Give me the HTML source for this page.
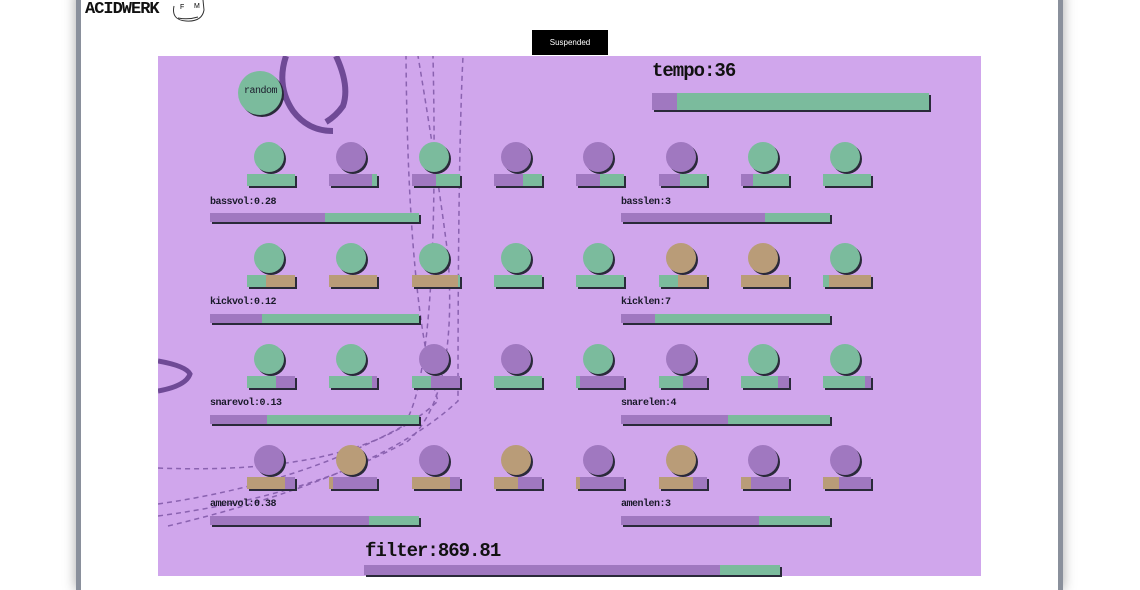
<!DOCTYPE html>
<html><head><meta charset="utf-8"><style>
body{margin:0;width:1140px;height:570px;overflow:hidden;background:#fff;position:relative;font-family:"Liberation Mono",monospace}
.frame{position:absolute;left:76px;top:-10px;width:977px;height:600px;border-left:5px solid #8a909c;border-right:5px solid #8a909c;box-shadow:0 0 12px rgba(0,0,0,.35);background:#fff}
.abs{position:absolute}
.panel{position:absolute;left:158px;top:56px;width:823px;height:520px;background:#d0a6ec;overflow:hidden}
.c{position:absolute;width:30px;height:30px;border-radius:50%;box-shadow:2px 2px 0 #2a2a3a}
.b{position:absolute;height:12px;box-shadow:2px 2px 0 #2a2a3a;display:flex;overflow:hidden}
.lb{position:absolute;height:9px;box-shadow:2px 2px 0 #2a2a3a;display:flex;overflow:hidden}
.lab{position:absolute;font:bold 10px "Liberation Mono",monospace;color:#1a1a2a;letter-spacing:-0.5px}
</style></head><body>
<div class="frame"></div>
<div class="abs" style="left:85px;top:0px;font:bold 17px 'Liberation Mono',monospace;letter-spacing:-1px;color:#111">ACIDWERK</div>
<svg class="abs" style="left:168px;top:0" width="40" height="24"><path d="M6 6 Q3 20 18 21 Q34 22 36 10 L35 0" fill="none" stroke="#333" stroke-width="1"/><path d="M10 18 Q20 20 30 17" stroke="#333" fill="none"/><text x="12" y="9" font-size="7" font-family="Liberation Sans">F</text><text x="26" y="8" font-size="7" font-family="Liberation Sans">M</text></svg>
<div class="abs" style="left:532px;top:30px;width:76px;height:25px;background:#000;color:#fff;font:8px 'Liberation Sans',sans-serif;text-align:center;line-height:25px">Suspended</div>
<div class="panel">
<svg class="abs" style="left:0;top:0" width="823" height="520" fill="none" stroke="#6f4a96">
<path d="M128 0 Q118 30 135 55 Q150 75 175 75" stroke-width="6"/>
<path d="M178 0 Q192 30 185 50 Q178 60 168 66" stroke-width="6"/>
<path d="M0 305 Q28 310 32 318 Q28 330 0 335" stroke-width="5"/>
<g stroke-width="1.5" stroke-dasharray="5 4" stroke="#8a62b0"><path d="M0 460 Q150 440 250 385 Q300 340 290 200 Q280 120 260 0"/><path d="M0 448 Q140 428 245 370 Q282 320 275 0"/><path d="M0 412 Q200 420 280 345 Q250 250 248 0"/><path d="M10 470 Q220 420 300 345 Q300 100 305 0"/></g>
</svg>
</div>
<div class="c" style="left:238px;top:71px;width:44px;height:44px;background:#7bbb9d"></div>
<div class="lab" style="left:244px;top:86px;font-weight:normal">random</div>
<div class="abs" style="left:652px;top:60px;font:bold 19px 'Liberation Mono',monospace;color:#111;letter-spacing:-1px">tempo:36</div>
<div class="lb" style="left:652px;top:93px;width:277px;height:17px"><div style="width:25px;background:#a078c0"></div><div style="flex:1;background:#7bbb9d"></div></div>
<div id="seq"></div>
<div class="lab" style="left:210px;top:197px">bassvol:0.28</div>
<div class="lab" style="left:621px;top:197px">basslen:3</div>
<div class="lab" style="left:210px;top:297px">kickvol:0.12</div>
<div class="lab" style="left:621px;top:297px">kicklen:7</div>
<div class="lab" style="left:210px;top:398px">snarevol:0.13</div>
<div class="lab" style="left:621px;top:398px">snarelen:4</div>
<div class="lab" style="left:210px;top:499px">amenvol:0.38</div>
<div class="lab" style="left:621px;top:499px">amenlen:3</div>
<div class="abs" style="left:365px;top:540px;font:bold 19px 'Liberation Mono',monospace;color:#111;letter-spacing:-1px">filter:869.81</div>
<div class="lb" style="left:364px;top:565px;width:416px;height:10px"><div style="width:356px;background:#a078c0"></div><div style="flex:1;background:#7bbb9d"></div></div>
<script>
var G='#7bbb9d',P='#a078c0',T='#b99c78';
var rows=[
 {y:142,c:[G,P,G,P,P,P,G,G],b:[[G,1,P],[P,.88,G],[P,.5,G],[P,.6,G],[P,.5,G],[P,.45,G],[P,.25,G],[G,1,P]]},
 {y:243,c:[G,G,G,G,G,T,T,G],b:[[G,.4,T],[T,1,G],[T,.96,G],[G,1,T],[G,1,T],[G,.4,T],[T,1,G],[G,.12,T]]},
 {y:344,c:[G,G,P,P,G,P,G,G],b:[[G,.6,P],[G,.9,P],[G,.4,P],[G,1,P],[G,.08,P],[G,.5,P],[G,.77,P],[G,.88,P]]},
 {y:445,c:[P,T,P,T,P,T,P,P],b:[[T,.8,P],[T,.08,P],[T,.8,P],[T,.5,P],[T,.08,P],[T,.72,P],[T,.22,P],[T,.33,P]]}];
var longb=[[325,765],[262,655],[267,728],[369,759]];
var h='';
rows.forEach(function(r,ri){for(var i=0;i<8;i++){var cx=254+i*82.3;
h+='<div class="c" style="left:'+cx+'px;top:'+r.y+'px;background:'+r.c[i]+'"></div>';
var b=r.b[i];h+='<div class="b" style="left:'+(cx-7)+'px;top:'+(r.y+32)+'px;width:48px"><div style="width:'+(b[1]*48)+'px;background:'+b[0]+'"></div><div style="flex:1;background:'+b[2]+'"></div></div>';}
var ly=r.y+71;
h+='<div class="lb" style="left:210px;top:'+ly+'px;width:209px"><div style="width:'+(longb[ri][0]-210)+'px;background:#a078c0"></div><div style="flex:1;background:#7bbb9d"></div></div>';
h+='<div class="lb" style="left:621px;top:'+ly+'px;width:209px"><div style="width:'+(longb[ri][1]-621)+'px;background:#a078c0"></div><div style="flex:1;background:#7bbb9d"></div></div>';});
document.getElementById('seq').innerHTML=h;
</script>
</body></html>
